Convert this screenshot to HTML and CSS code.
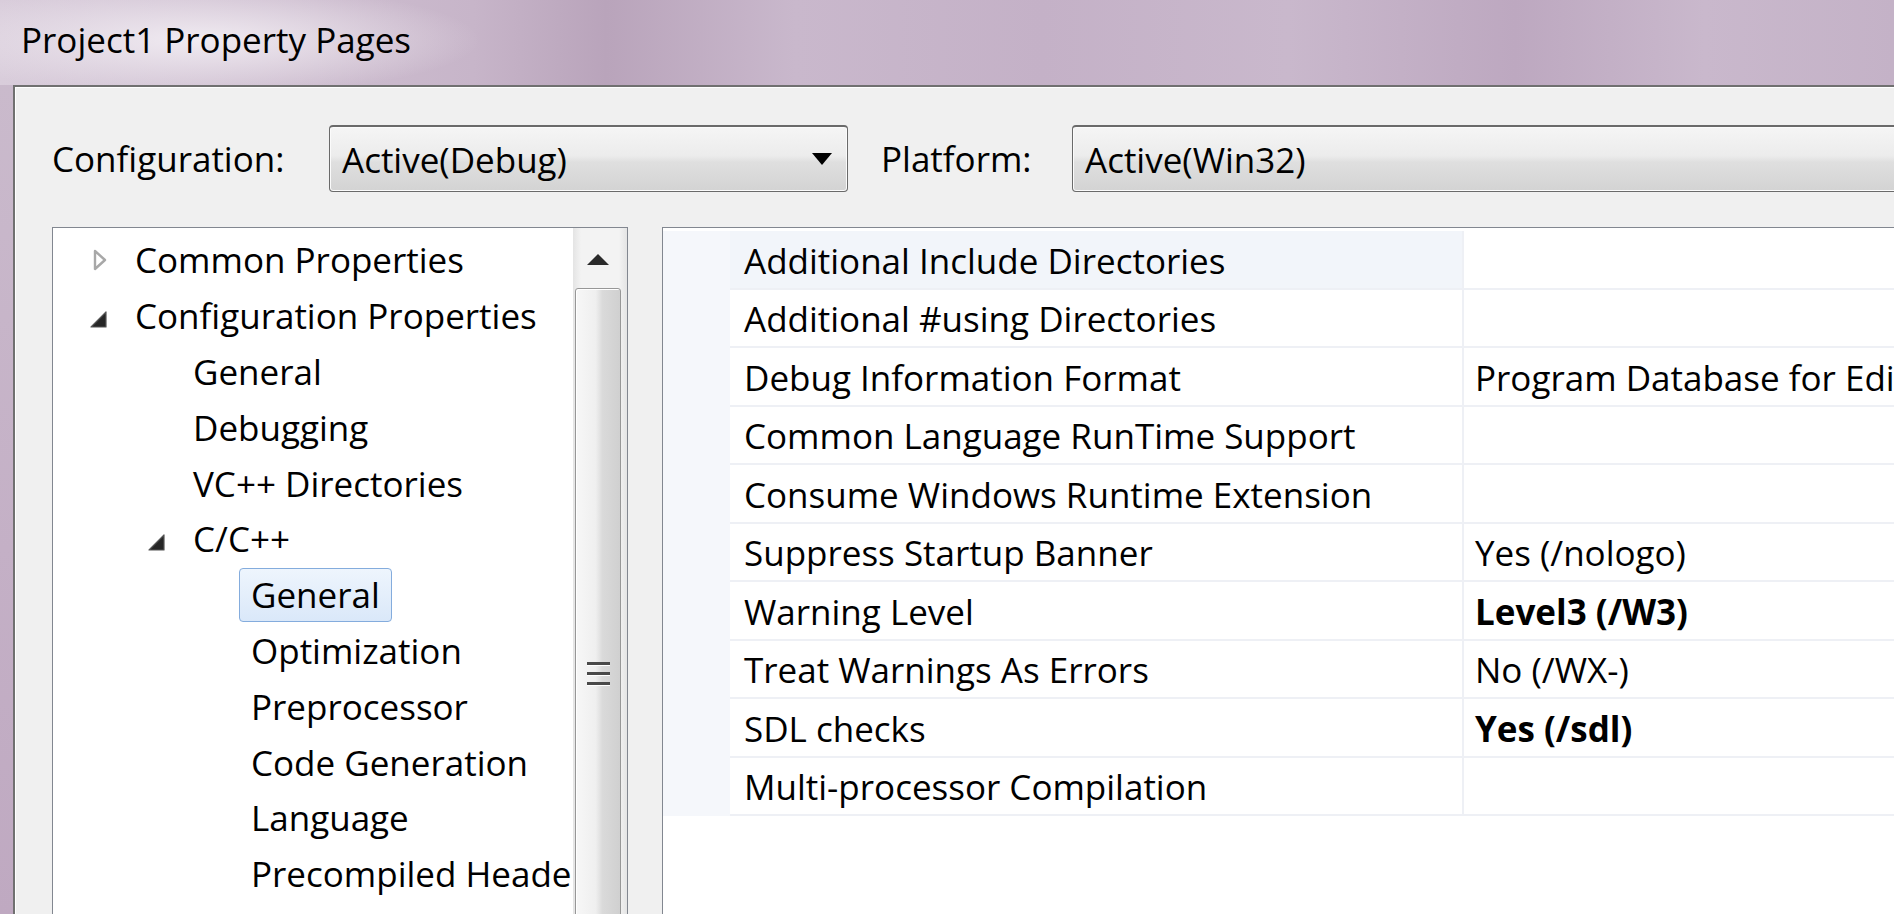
FILE: index.html
```html
<!DOCTYPE html>
<html lang="en">
<head>
  <meta charset="UTF-8" />
  <meta name="viewport" content="width=device-width, initial-scale=1.0" />
  <title>Project1 Property Pages</title>
  <link rel="stylesheet" href="styles.css">
</head>
<body>

  <!-- Window title -->
  <div class="titlebar">
    <span class="title-text">Project1 Property Pages</span>
  </div>

  <div class="frame-body">
    <div class="dialog">

      <!-- Configuration / Platform pickers -->
      <div class="config-row">
        <span class="field-label config-label">Configuration:</span>
        <div class="combo combo-config">
          <span>Active(Debug)</span>
          <svg class="combo-arrow" width="20" height="12" viewBox="0 0 20 12"><path d="M0 0 H20 L10 12 Z" fill="#000"/></svg>
        </div>
        <span class="field-label platform-label">Platform:</span>
        <div class="combo combo-platform">
          <span>Active(Win32)</span>
        </div>
      </div>

      <div class="panels">

        <!-- Property tree -->
        <div class="tree-panel">
          <ul class="tree">
            <li class="tree-item lvl-1">
              <span class="expander"><svg width="16" height="24" viewBox="0 0 16 24"><path d="M3 3 L13 12 L3 21 Z" fill="#fff" stroke="#a8a8a8" stroke-width="2.4" stroke-linejoin="round"/></svg></span>
              <span class="tree-label">Common Properties</span>
            </li>
            <li class="tree-item lvl-1">
              <span class="expander open"><svg width="20" height="20" viewBox="0 0 20 20"><path d="M17 3 L17 18 L2 18 Z" fill="#262626" stroke="#555" stroke-width="1.2" stroke-linejoin="round"/></svg></span>
              <span class="tree-label">Configuration Properties</span>
            </li>
            <li class="tree-item lvl-2"><span class="expander"></span><span class="tree-label">General</span></li>
            <li class="tree-item lvl-2"><span class="expander"></span><span class="tree-label">Debugging</span></li>
            <li class="tree-item lvl-2"><span class="expander"></span><span class="tree-label">VC++ Directories</span></li>
            <li class="tree-item lvl-2">
              <span class="expander open"><svg width="20" height="20" viewBox="0 0 20 20"><path d="M17 3 L17 18 L2 18 Z" fill="#262626" stroke="#555" stroke-width="1.2" stroke-linejoin="round"/></svg></span>
              <span class="tree-label">C/C++</span>
            </li>
            <li class="tree-item lvl-3"><span class="expander"></span><span class="tree-label selected">General</span></li>
            <li class="tree-item lvl-3"><span class="expander"></span><span class="tree-label">Optimization</span></li>
            <li class="tree-item lvl-3"><span class="expander"></span><span class="tree-label">Preprocessor</span></li>
            <li class="tree-item lvl-3"><span class="expander"></span><span class="tree-label">Code Generation</span></li>
            <li class="tree-item lvl-3"><span class="expander"></span><span class="tree-label">Language</span></li>
            <li class="tree-item lvl-3"><span class="expander"></span><span class="tree-label">Precompiled Headers</span></li>
            <li class="tree-item lvl-3"><span class="expander"></span><span class="tree-label">Output Files</span></li>
          </ul>

          <div class="scrollbar">
            <div class="scroll-btn">
              <svg width="24" height="13" viewBox="0 0 24 13"><path d="M12 1 L23 12 H1 Z" fill="#2a2a2a"/></svg>
            </div>
            <div class="scroll-thumb">
              <div class="grip"><span></span><span></span><span></span></div>
            </div>
          </div>
        </div>

        <!-- Property grid -->
        <div class="grid-panel">
          <div class="prop-row current">
            <div class="gutter"></div>
            <div class="prop-name">Additional Include Directories</div>
            <div class="prop-value"></div>
          </div>
          <div class="prop-row">
            <div class="gutter"></div>
            <div class="prop-name">Additional #using Directories</div>
            <div class="prop-value"></div>
          </div>
          <div class="prop-row">
            <div class="gutter"></div>
            <div class="prop-name">Debug Information Format</div>
            <div class="prop-value">Program Database for Edit And Continue (/ZI)</div>
          </div>
          <div class="prop-row">
            <div class="gutter"></div>
            <div class="prop-name">Common Language RunTime Support</div>
            <div class="prop-value"></div>
          </div>
          <div class="prop-row">
            <div class="gutter"></div>
            <div class="prop-name">Consume Windows Runtime Extension</div>
            <div class="prop-value"></div>
          </div>
          <div class="prop-row">
            <div class="gutter"></div>
            <div class="prop-name">Suppress Startup Banner</div>
            <div class="prop-value">Yes (/nologo)</div>
          </div>
          <div class="prop-row">
            <div class="gutter"></div>
            <div class="prop-name">Warning Level</div>
            <div class="prop-value bold">Level3 (/W3)</div>
          </div>
          <div class="prop-row">
            <div class="gutter"></div>
            <div class="prop-name">Treat Warnings As Errors</div>
            <div class="prop-value">No (/WX-)</div>
          </div>
          <div class="prop-row">
            <div class="gutter"></div>
            <div class="prop-name">SDL checks</div>
            <div class="prop-value bold">Yes (/sdl)</div>
          </div>
          <div class="prop-row">
            <div class="gutter"></div>
            <div class="prop-name">Multi-processor Compilation</div>
            <div class="prop-value"></div>
          </div>
        </div>

      </div>
    </div>
  </div>

</body>
</html>
```

FILE: styles.css
```css
body {
  margin: 0;
  width: 1894px;
  height: 914px;
  overflow: hidden;
  font-family: "Open Sans", "Noto Sans", sans-serif;
  font-size: 35px;
  color: #000;
  background: linear-gradient(180deg, #cbbccd 0%, #c4b0c6 60%, #bfa9c1 100%);
}

/* Title bar */
.titlebar {
  height: 85px;
  box-sizing: border-box;
  display: flex;
  align-items: center;
  padding: 0 0 6px 21px;
  background:
    radial-gradient(ellipse 280px 55px at 200px 40px, rgba(242, 237, 243, 0.95), rgba(242, 237, 243, 0) 100%),
    linear-gradient(90deg, #d9cddb 0%, #c7b5c9 25%, #b9a4bb 32%, #c9b8cc 42%, #c4b1c7 55%, #c9b8cc 68%, #bda8c0 80%, #c9b8cc 90%, #c4b2c7 100%);
}
.title-text {
  white-space: nowrap;
}

.frame-body {
  padding-left: 13px;
  height: 829px;
}

.dialog {
  height: 100%;
  box-sizing: border-box;
  background-color: #f0f0f0;
  border-top: 2px solid #707070;
  border-left: 2px solid #707070;
  box-shadow: inset 1px 1px 0 #fff;
  padding: 38px 0 0 37px;
  overflow: hidden;
}

/* Configuration row */
.config-row {
  display: flex;
  align-items: center;
  height: 67px;
}
.field-label {
  flex-shrink: 0;
  white-space: nowrap;
}
.config-label {
  width: 277px;
}
.platform-label {
  width: 191px;
  margin-left: 33px;
}
.combo {
  flex-shrink: 0;
  height: 67px;
  box-sizing: border-box;
  display: flex;
  align-items: center;
  padding: 0 15px 0 12px;
  border: 1px solid #6a6a6a;
  border-top: 2px solid #6a6a6a;
  border-radius: 4px;
  background: linear-gradient(180deg, #f5f5f5 0%, #ececec 45%, #dfdfdf 55%, #d3d3d3 100%);
  box-shadow: inset 0 0 0 1px #fbfbfb;
  white-space: nowrap;
}
.combo-config {
  width: 519px;
  justify-content: space-between;
}
.combo-platform {
  width: 1000px;
}

/* Panels */
.panels {
  display: flex;
  gap: 34px;
  margin-top: 35px;
  height: 760px;
}

.tree-panel {
  width: 576px;
  flex-shrink: 0;
  box-sizing: border-box;
  display: flex;
  border: 1px solid #828790;
  background-color: #fff;
}
.tree {
  flex: 1;
  min-width: 0;
  list-style: none;
  margin: 0;
  padding: 4px 0 0;
  overflow: hidden;
}
.tree-item {
  height: 55.8px;
  display: flex;
  align-items: center;
  white-space: nowrap;
}
.lvl-1 { padding-left: 24px; }
.lvl-2 { padding-left: 82px; }
.lvl-3 { padding-left: 140px; }
.expander {
  width: 58px;
  flex-shrink: 0;
  box-sizing: border-box;
  display: flex;
  align-items: center;
  padding-left: 15px;
}
.expander.open {
  padding-left: 12px;
  padding-top: 6px;
}
.tree-label {
  line-height: 1;
}
.tree-label.selected {
  margin-left: -12px;
  padding: 0 11px;
  height: 54px;
  box-sizing: border-box;
  display: flex;
  align-items: center;
  border: 1px solid #84acdd;
  border-radius: 4px;
  background: linear-gradient(180deg, #eef5fd 0%, #dae8f9 100%);
}

/* Scrollbar */
.scrollbar {
  width: 54px;
  flex-shrink: 0;
  box-sizing: border-box;
  padding: 0 6px 0 2px;
  background: linear-gradient(90deg, #e4e4e4 0%, #f3f3f3 15%, #f3f3f3 85%, #e4e4e4 100%);
  overflow: hidden;
}
.scroll-btn {
  height: 58px;
  display: flex;
  align-items: center;
  justify-content: center;
  padding-top: 4px;
  box-sizing: border-box;
}
.scroll-thumb {
  height: 770px;
  box-sizing: border-box;
  margin-top: 2px;
  border: 1px solid #979797;
  border-radius: 3px;
  background: linear-gradient(90deg, #f7f7f7 0%, #efefef 45%, #dadada 60%, #d0d0d0 100%);
  box-shadow: inset 1px 1px 0 #fff;
  display: flex;
  align-items: center;
  justify-content: center;
}
.grip {
  display: flex;
  flex-direction: column;
  gap: 7px;
}
.grip span {
  display: block;
  width: 23px;
  height: 3px;
  background-color: #4a4a4a;
  box-shadow: 0 1px 0 #fff;
}

/* Property grid */
.grid-panel {
  flex: 1;
  min-width: 0;
  border-top: 1px solid #828790;
  border-left: 1px solid #828790;
  background-color: #fff;
  padding-top: 3px;
  overflow: hidden;
}
.prop-row {
  display: flex;
  height: 58.5px;
}
.gutter {
  width: 67px;
  flex-shrink: 0;
  background-color: #f5f7fb;
}
.prop-name,
.prop-value {
  box-sizing: border-box;
  display: flex;
  align-items: center;
  white-space: nowrap;
  border-bottom: 2px solid #eef0f5;
  padding-top: 2px;
}
.prop-name {
  width: 734px;
  flex-shrink: 0;
  padding-left: 14px;
  border-right: 2px solid #eef0f5;
}
.prop-value {
  flex: 1;
  padding-left: 11px;
}
.prop-value.bold {
  font-weight: 700;
}
.prop-row.current .prop-name {
  background-color: #f2f5fa;
}
```
